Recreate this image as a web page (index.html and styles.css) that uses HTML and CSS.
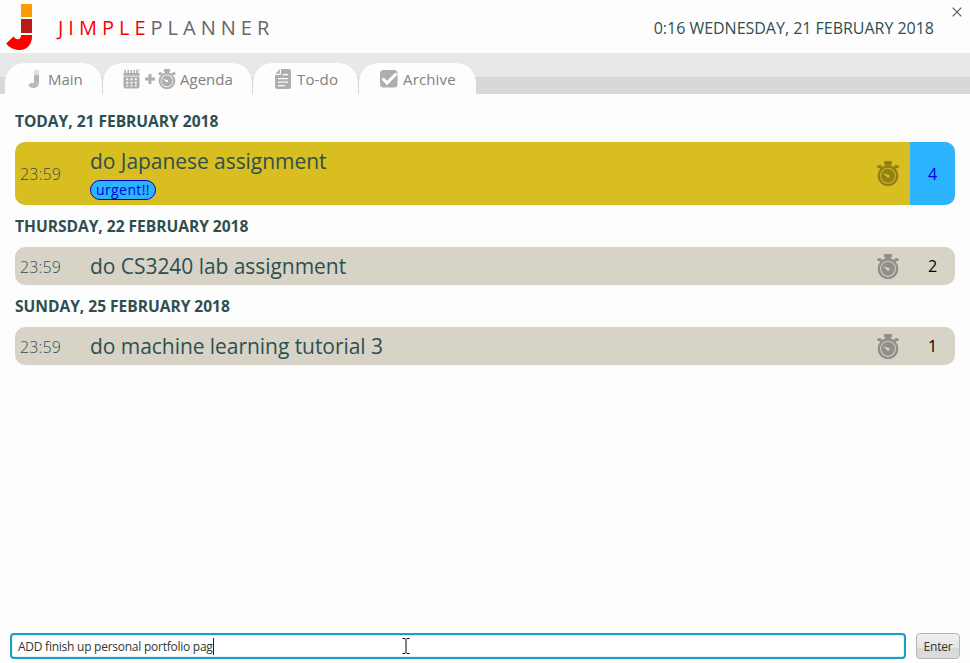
FILE: index.html
```html
<!DOCTYPE html>
<html lang="en">
<head>
<meta charset="utf-8">
<title>JimplePlanner</title>
<link rel="stylesheet" href="styles.css">
</head>
<body>
<svg class="defs" aria-hidden="true">
  <symbol id="watch" viewBox="0 0 22 25">
    <path fill-rule="evenodd" d="M7 .8Q7 0 8 0H14Q15 0 15 .8V3.500H13.500V4.500A10.500 10.500 0 0 1 17 6L18 5 17.400 4.300Q19.500 3.200 21.800 5V6.500L20.500 7.500 19.600 6.900 18.700 7.800A10.400 10.400 0 1 1 3.300 7.800L2.400 6.900 1.500 7.500.2 6.500V5Q2.500 3.200 4.600 4.300L4 5 5 6A10.500 10.500 0 0 1 8.500 4.500V3.500H7ZM11 6.900A7.900 7.900 0 1 0 11 22.700 7.900 7.900 0 1 0 11 6.900ZM11 7.800A7 7 0 1 1 11 21.800 7 7 0 1 1 11 7.800ZM5.800 12.600 9.600 15.600A1.500 1.500 0 1 0 11.200 13.700Z"/>
  </symbol>
</svg>
<div class="app">
  <header class="header">
    <svg class="logo" viewBox="0 0 28 47"><path fill="#ff9a00" d="M15 0h11v13h-11z"/><path fill="#b71b1b" d="M15 15h11v14h-11z"/><path fill="#f00" d="M15 31h11v2C26 40 21 46 14 46 8 46 3 43.500.2 39.500L7.500 32.500C9 34.500 10.500 35.300 12 35.300 14 35.300 15 33.500 15 31z"/></svg>
    <h1 class="brand"><span class="brand-red">JIMPLE</span>PLANNER</h1>
    <div class="clock">0:16 WEDNESDAY, 21 FEBRUARY 2018</div>
    <svg class="close" viewBox="0 0 10 10"><path d="M.7.700 9.300 9.300M9.300.7.700 9.300" stroke="#555" stroke-width="1.100"/></svg>
  </header>
  <nav class="tabs">
    <div class="tab tab-main"><svg class="ico-j" viewBox="0 0 12 20"><path fill="#e0e0e0" d="M6 1h5v5H6z"/><path fill="#b4b4b4" d="M6 6h5v6H6z"/><path fill="#bcbcbc" d="M6 12h5v1.500C11 17 8.500 19 5.500 19 3 19 1 18 .2 16.500L3 13.500Q6 15.500 6 12z"/></svg><span>Main</span></div>
    <div class="tab tab-agenda"><svg class="ico-cal" viewBox="0 0 17 20"><path fill-rule="evenodd" d="M.5 6.800V4H1.500V1h1.500v3h1.500V1h1.500v3H7.500V1h1.500v3h1.500V1h1.500v3H13V1h1v3h.5V0h1v4h1v2.800zM.5 7.500h16V17.500Q16.500 19.500 14.500 19.500h-12Q.5 19.500.5 17.500zM3.300 9.300v2h2v-2zm4.200 0v2h2v-2zm4.200 0v2h2v-2zM3.300 12.800v2h2v-2zm4.200 0v2h2v-2zm4.200 0v2h2v-2zM3.300 16.300v1.200h2v-1.200zm4.200 0v1.200h2v-1.200zm4.200 0v1.200h2v-1.200z"/></svg><svg class="ico-plus" viewBox="0 0 10 10"><path d="M3.500 0h3v3.500H10v3H6.500V10h-3V6.500H0v-3h3.500z"/></svg><svg class="ico-watch"><use href="#watch"/></svg><span>Agenda</span></div>
    <div class="tab tab-todo"><svg class="ico-doc" viewBox="0 0 16 20"><path fill-rule="evenodd" d="M6 0h7.500Q16 0 16 2.500v15Q16 20 13.500 20h-11Q0 20 0 17.500V6h4.500Q6 6 6 4.500zM4.800 0V4.800H.3zM7.500 5v1.200H13V5zM3 9v1.300h10V9zm0 3.500v1.300h10v-1.300zM3 16v1.300h7V16z"/></svg><span>To-do</span></div>
    <div class="tab tab-archive"><svg class="ico-check" viewBox="0 0 18 18"><rect width="17.500" height="17.500" rx="3.500"/><path d="M2.700 8.500 7 13 16.500 3.500" fill="none" stroke="#fff" stroke-width="3"/></svg><span>Archive</span></div>
  </nav>
  <main class="list">
    <h2 class="day">TODAY, 21 FEBRUARY 2018</h2>
    <section class="task urgent">
      <time class="time">23:59</time>
      <div class="body"><div class="title">do Japanese assignment</div><span class="tag">urgent!!</span></div>
      <svg class="type"><use href="#watch"/></svg>
      <div class="num">4</div>
    </section>
    <h2 class="day">THURSDAY, 22 FEBRUARY 2018</h2>
    <section class="task">
      <time class="time">23:59</time>
      <div class="body"><div class="title">do CS3240 lab assignment</div></div>
      <svg class="type"><use href="#watch"/></svg>
      <div class="num">2</div>
    </section>
    <h2 class="day">SUNDAY, 25 FEBRUARY 2018</h2>
    <section class="task">
      <time class="time">23:59</time>
      <div class="body"><div class="title">do machine learning tutorial 3</div></div>
      <svg class="type"><use href="#watch"/></svg>
      <div class="num">1</div>
    </section>
  </main>
  <footer class="command">
    <div class="input"><span class="typed">ADD finish up personal portfolio pag</span><i class="caret"></i></div>
    <button class="enter">Enter</button>
  </footer>
  <svg class="pointer" viewBox="0 0 8 16"><path d="M.5.500H3L4 1.500 5 .5H7.500M4 1.500V14.500M.5 15.500H3L4 14.500 5 15.500H7.500" fill="none" stroke="#000"/></svg>
</div>
</body>
</html>
```

FILE: styles.css
```css
* { box-sizing: border-box; }
html, body { height: 663px; overflow: hidden; }
body { margin: 0; background: #fdfdfd; font-family: "Open Sans", sans-serif; color: #2f4f4f; }
.defs { position: absolute; width: 0; height: 0; }
.app { position: relative; width: 970px; height: 663px; display: flex; flex-direction: column; overflow: hidden; background: #fdfdfd; }
.header { height: 53px; flex: none; display: flex; align-items: flex-start; padding: 4px 8px 0 6px; }
.logo { width: 28px; height: 47px; flex: none; }
.brand { margin: 10px 0 0 24px; font-size: 20px; line-height: 28px; font-weight: 450; letter-spacing: 5px; color: #666; white-space: nowrap; }
.brand-red { color: #f00; }
.clock { margin: 12px 18px 0 auto; font-size: 16px; line-height: 24px; letter-spacing: -.02px; white-space: nowrap; }
.close { width: 10px; height: 10px; margin-top: 3px; }
.tabs { height: 41px; flex: none; display: flex; align-items: flex-end; gap: 1px; padding-left: 5px; background: linear-gradient(#e8e8e8 24px, #d8d8d8 24px); }
.tab { height: 31px; display: flex; align-items: center; border-radius: 20px 20px 0 0; background: #fdfdfd; color: #808080; font-size: 15px; line-height: 20px; white-space: nowrap; fill: #aeaeae; }
.tab svg { flex: none; }
.tab-main { width: 97px; padding-left: 23px; }
.tab-agenda { width: 149px; padding-left: 20px; }
.tab-todo { width: 105px; padding-left: 22px; }
.tab-archive { width: 117px; padding-left: 21px; }
.ico-j { width: 12px; height: 20px; margin-right: 8px; }
.ico-cal { width: 17px; height: 20px; margin-right: 5px; }
.ico-plus { width: 10px; height: 10px; margin-right: 3px; }
.ico-watch { width: 18px; height: 20px; margin-right: 4px; }
.ico-doc { width: 16px; height: 20px; margin-right: 6px; }
.ico-check { width: 18px; height: 18px; margin-right: 5px; }
.tab-todo, .tab-archive { letter-spacing: .15px; }
.list { flex: 1; padding: 6px 15px 0; }
.day { margin: 0; height: 42px; line-height: 43px; font-size: 15.600px; font-weight: 700; letter-spacing: -.04px; }
.task { height: 38px; display: flex; align-items: center; border-radius: 10px; overflow: hidden; background: #d7d3c7; }
.time { width: 75px; padding-left: 5px; font-size: 16px; font-weight: 350; line-height: 20px; letter-spacing: .15px; padding-top: 1px; }
.body { flex: 1; }
.title { font-size: 21px; line-height: 30px; letter-spacing: -.05px; white-space: nowrap; }
.urgent .title { line-height: 28px; margin-bottom: 5px; }
.tag { display: flex; align-items: center; justify-content: center; width: 66px; height: 20px; border: 1px solid #00d; border-radius: 10px; background: #2cb4ff; color: #00d; font-size: 14px; line-height: 16px; letter-spacing: .4px; }
.type { width: 22px; height: 25px; margin-right: 11.500px; fill: #000; opacity: .32; }
.num { width: 45px; align-self: stretch; display: flex; align-items: center; justify-content: center; font-size: 16px; color: #000; }
.urgent { height: 63px; background: #d9be22; }
.urgent .num { background: #2cb4ff; color: #00d; }
.command { height: 30px; flex: none; display: flex; gap: 10px; padding: 0 10px 4px; }
.input { flex: 1; height: 26px; display: flex; align-items: center; padding-left: 6px; border: 2px solid #1a9fcb; border-radius: 4px; background: #fff; box-shadow: inset 0 0 0 1px #def2f8; }
.typed { font-size: 12px; letter-spacing: -.25px; color: #333; white-space: nowrap; }
.caret { width: 1px; height: 17px; background: #222; }
.enter { width: 44px; height: 26px; padding: 0; border: 1px solid #b5b5b5; border-radius: 4px; background: linear-gradient(#f0f0f0, #e4e4e4 60%, #d8d8d8 60%, #dcdcdc); color: #333; font: 12px "Open Sans", sans-serif; letter-spacing: -.2px; }
.pointer { position: absolute; left: 402px; top: 638px; width: 8px; height: 16px; }
```
